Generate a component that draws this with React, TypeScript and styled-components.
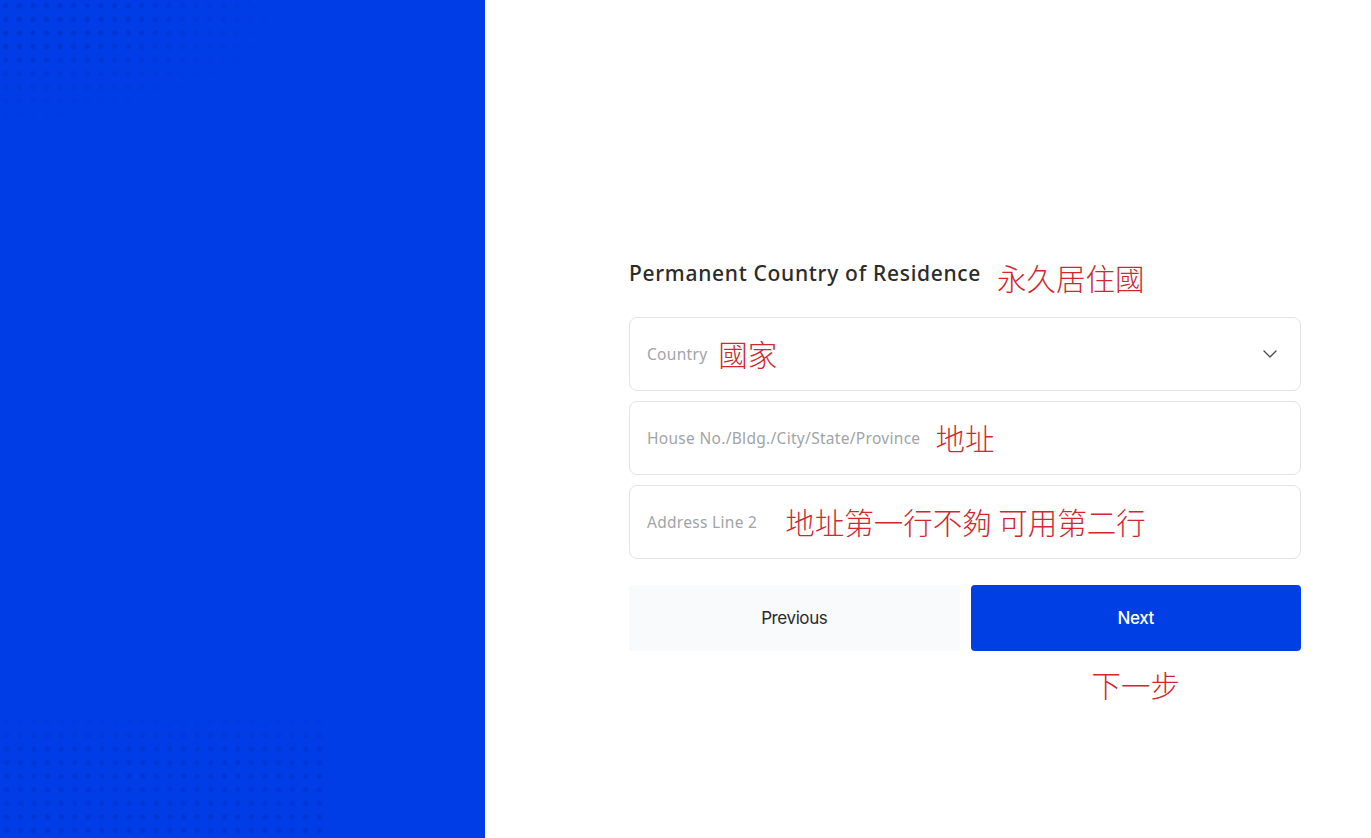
import React from "react";
import styled, { createGlobalStyle } from "styled-components";

const GlobalStyle = createGlobalStyle`
  html, body {
    margin: 0;
    padding: 0;
    height: 100%;
  }
  body {
    font-family: "Noto Sans", Inter, "Liberation Sans", sans-serif;
    background: #ffffff;
  }
  #root {
    height: 100%;
  }
`;

const Chevron = () => (
  <svg width="14" height="8" viewBox="0 0 14 8" fill="none">
    <path d="M1 1l6 6 6-6" stroke="#4a4a4a" strokeWidth="1.3" strokeLinecap="round" strokeLinejoin="round" />
  </svg>
);

export default function App() {
  return (
    <>
      <GlobalStyle />
      <Page>
        <SidePanel />
        <Main>
          <Form>
            <TitleRow>
              <Title>Permanent Country of Residence</Title>
              <Note $gap={16}>永久居住國</Note>
            </TitleRow>

            <Field>
              <Label>Country</Label>
              <Note $gap={11}>國家</Note>
              <Spacer />
              <Chevron />
            </Field>

            <Field>
              <Label>House No./Bldg./City/State/Province</Label>
              <Note $gap={15}>地址</Note>
            </Field>

            <Field>
              <Label>Address Line 2</Label>
              <Note $gap={28}>地址第一行不夠 可用第二行</Note>
            </Field>

            <ButtonRow>
              <Column>
                <Button $primary={false}>Previous</Button>
              </Column>
              <Column>
                <Button $primary>Next</Button>
                <CenterNote>下一步</CenterNote>
              </Column>
            </ButtonRow>
          </Form>
        </Main>
      </Page>
    </>
  );
}

const Page = styled.div`
  display: flex;
  height: 838px;
  overflow: hidden;
`;

const SidePanel = styled.div`
  position: relative;
  flex: 0 0 485px;
  background-color: #003de6;
  overflow: hidden;

  &::before,
  &::after {
    content: "";
    position: absolute;
    left: 0;
    background-image: radial-gradient(circle, rgba(0, 20, 120, 0.2) 2.4px, transparent 2.9px);
    background-size: 13.6px 13.6px;
  }

  &::before {
    top: 0;
    width: 280px;
    height: 120px;
    background-position: -1px -1px;
    -webkit-mask-image: radial-gradient(ellipse 100% 100% at 0 0, #000 40%, transparent 100%);
    mask-image: radial-gradient(ellipse 100% 100% at 0 0, #000 40%, transparent 100%);
  }

  &::after {
    bottom: 0;
    width: 330px;
    height: 125px;
    background-position: 0 2px;
    background-image: radial-gradient(circle, rgba(0, 20, 120, 0.15) 2.4px, transparent 2.9px);
    -webkit-mask-image: linear-gradient(to bottom, transparent 0%, #000 30%);
    mask-image: linear-gradient(to bottom, transparent 0%, #000 30%);
  }
`;

const Main = styled.div`
  flex: 1;
  padding: 258px 70px 0 144px;
`;

const Form = styled.div`
  display: flex;
  flex-direction: column;
  gap: 10px;
  max-width: 672px;
`;

const TitleRow = styled.div`
  display: flex;
  align-items: center;
  margin-bottom: 9px;
  height: 40px;
`;

const Title = styled.h2`
  margin: 0;
  font-size: 21px;
  font-weight: 500;
  letter-spacing: 0.7px;
  color: #2b2b2b;
  position: relative;
  top: -5px;
  white-space: nowrap;
`;

const Note = styled.span<{ $gap: number }>`
  margin-left: ${(p) => p.$gap}px;
  font-family: "Noto Sans CJK TC", "Noto Sans CJK SC", sans-serif;
  font-size: 29.5px;
  font-weight: 300;
  color: #d0282e;
  line-height: 1;
  white-space: nowrap;
`;

const Field = styled.div`
  display: flex;
  align-items: center;
  padding: 0 23px 0 17px;
  border: 1px solid #e3e4e7;
  border-radius: 8px;
  box-sizing: border-box;
  height: 74px;
`;

const Label = styled.span`
  font-size: 15.5px;
  letter-spacing: 0.3px;
  color: #a2a4a8;
  white-space: nowrap;
`;

const Spacer = styled.div`
  flex: 1;
`;

const ButtonRow = styled.div`
  display: grid;
  grid-template-columns: 1fr 1fr;
  gap: 11px;
  margin-top: 16px;
`;

const Column = styled.div`
  display: flex;
  flex-direction: column;
  align-items: center;
`;

const Button = styled.button<{ $primary: boolean }>`
  width: 100%;
  height: 66px;
  border: none;
  border-radius: ${(p) => (p.$primary ? "4px" : "0")};
  background: ${(p) => (p.$primary ? "#003fe3" : "#f9fafc")};
  color: ${(p) => (p.$primary ? "#ffffff" : "#2b2b2b")};
  font-family: Inter, "Noto Sans", sans-serif;
  font-size: 17px;
  font-weight: ${(p) => (p.$primary ? 500 : 400)};
  letter-spacing: -0.4px;
  cursor: pointer;
`;

const CenterNote = styled.span`
  margin-top: 19px;
  font-family: "Noto Sans CJK TC", "Noto Sans CJK SC", sans-serif;
  font-size: 29.5px;
  font-weight: 300;
  color: #d0282e;
  line-height: 1;
`;
